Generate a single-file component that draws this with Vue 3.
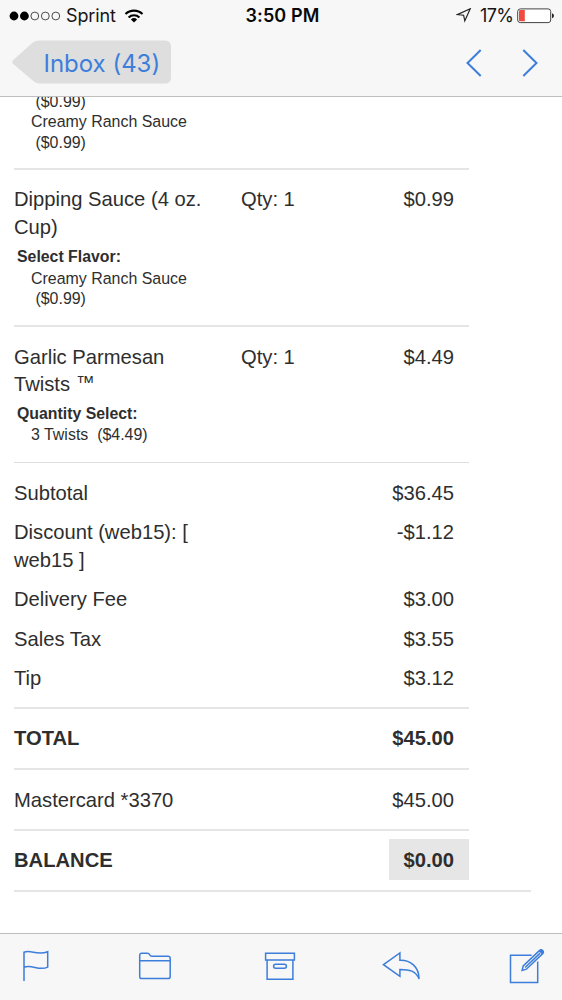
<script setup>
const items = [
  { id: 'dipping', name: ['Dipping Sauce (4 oz.', 'Cup)'], qty: 'Qty: 1', price: '$0.99', label: 'Select Flavor:', options: ['Creamy Ranch Sauce', '\u00a0($0.99)'] },
  { id: 'twists', name: ['Garlic Parmesan', 'Twists\u00a0'], mark: '™', qty: 'Qty: 1', price: '$4.49', label: 'Quantity Select:', options: ['3 Twists\u00a0 ($4.49)'] },
]
const charges = [
  { name: ['Subtotal'], amount: '$36.45' },
  { name: ['Discount (web15): [', 'web15 ]'], amount: '-$1.12' },
  { name: ['Delivery Fee'], amount: '$3.00' },
  { name: ['Sales Tax'], amount: '$3.55' },
  { name: ['Tip'], amount: '$3.12' },
]
</script>

<template>
  <div class="screen">
    <header class="top">
      <div class="status">
        <div class="carrier">
          <svg class="dots" width="52" height="10" viewBox="0 0 52 10">
            <circle cx="5" cy="5" r="4.4" /><circle cx="15.4" cy="5" r="4.4" />
            <g fill="none" stroke="#222" stroke-width="0.8"><circle cx="25.8" cy="5" r="3.9" /><circle cx="36.3" cy="5" r="3.9" /><circle cx="46.8" cy="5" r="3.9" /></g>
          </svg>
          <span class="sprint">Sprint</span>
          <svg class="wifi" width="20" height="14" viewBox="0 0 20 14" fill="none" stroke="#000" stroke-width="2.1">
            <path d="M1.5 5.1A12.2 12.2 0 0 1 18.5 5.1" /><path d="M4.6 8.4A7.8 7.8 0 0 1 15.4 8.4" />
            <path d="M6.9 10.5A4.6 4.6 0 0 1 13.1 10.5L10 13.6Z" fill="#000" stroke="none" />
          </svg>
        </div>
        <div class="clock">3:50 PM</div>
        <div class="power">
          <svg width="16" height="15" viewBox="0 0 16 15" fill="none" stroke="#222" stroke-width="1.2"><path d="M14.2 .8L1.4 6.6L7.6 7.2L8.8 12.9Z" /></svg>
          <span class="percent">17%</span>
          <svg class="battery" width="38" height="16" viewBox="0 0 38 16">
            <rect x="0.7" y="0.9" width="33" height="13.7" rx="2.6" fill="#fff" stroke="#444" stroke-width="1" />
            <path d="M3.2 2.1H7.8V13.3H3.2Q2 13.3 2 12V3.4Q2 2.1 3.2 2.1Z" fill="#f04a3e" />
            <path d="M35 5.3Q37 6 37 7.7T35 10.2Z" fill="#222" />
          </svg>
        </div>
      </div>
      <nav class="nav">
        <div class="back">
          <svg class="back-shape" width="160" height="44" viewBox="0 0 160 44"><path d="M1 20.2L20.5 2.7Q23.5 0.4 27 0.4H153Q159 0.4 159 6.4V37.6Q159 43.6 153 43.6H28Q24.5 43.6 21.5 41.2L1 23.7Q-0.7 22 1 20.2Z" fill="#dedede" /></svg>
          <span class="back-label">Inbox (43)</span>
        </div>
        <svg class="arrows" width="74" height="28" viewBox="0 0 74 28" fill="none" stroke="#3d7edb" stroke-width="2"><path d="M15.7 1L2.5 14L15.7 27" /><path d="M58.3 1L71.5 14L58.3 27" /></svg>
      </nav>
    </header>

    <main class="mail">
      <section class="previous">
        <div>&nbsp;($0.99)</div><div>Creamy Ranch Sauce</div><div>&nbsp;($0.99)</div>
      </section>
      <section v-for="item in items" :key="item.id" class="item" :class="item.id">
        <div class="item-row">
          <div><div v-for="(line, i) in item.name" :key="line">{{ line }}<span v-if="item.mark && i === item.name.length - 1" class="mark">{{ item.mark }}</span></div></div>
          <div>{{ item.qty }}</div>
          <div class="amount">{{ item.price }}</div>
        </div>
        <div class="option-label">{{ item.label }}</div>
        <div class="options"><div v-for="line in item.options" :key="line">{{ line }}</div></div>
      </section>
      <section class="charges">
        <div v-for="charge in charges" :key="charge.amount" class="charge">
          <div><div v-for="line in charge.name" :key="line">{{ line }}</div></div>
          <div class="amount">{{ charge.amount }}</div>
        </div>
      </section>
      <section class="summary strong"><span>TOTAL</span><span class="amount">$45.00</span></section>
      <section class="summary card"><span>Mastercard *3370</span><span class="amount">$45.00</span></section>
      <section class="summary balance strong"><span>BALANCE</span><span class="balance-amount">$0.00</span></section>
    </main>

    <footer class="toolbar">
      <svg width="28" height="32" viewBox="0 0 28 32"><path d="M2 31V2.3C9-.8 15 6.2 25.7 1.7V17.1C17 21.5 10 14 2 17.3" /></svg>
      <svg width="34" height="30" viewBox="0 0 34 30"><path d="M1.7 9.3V4.5Q1.7 2.3 3.8 2.3H9.4Q11 2.3 11.7 3.8Q12.4 5.2 14 5.2H30Q32.2 5.2 32.2 7.4V25.5Q32.2 27.6 30 27.6H3.9Q1.7 27.6 1.7 25.5V9.8H32.2" /></svg>
      <svg class="archive" width="32" height="30" viewBox="0 0 32 30"><path d="M1.6 2.2H30.4V9H1.6ZM3.1 9V28.3H28.9V9" /><rect x="9.6" y="13.3" width="12.8" height="3.9" rx="1.95" /></svg>
      <svg class="reply" width="40" height="30" viewBox="0 0 40 30"><path d="M1.5 13.7L17.9 2V9.3C28.5 9 36.9 15.5 37.1 27.9C33.7 20 27.5 18.3 17.9 18.4V25.4Z" /></svg>
      <svg width="36" height="36" viewBox="0 0 36 36"><path d="M22.7 7.3H1.5V34.4H28.7V13.5" /><path d="M13.1 22.4L14.2 18L30.6 2.4Q32 .9 33.6 2.5Q35.2 4.1 33.7 5.6L17.4 21.2Z" /><path d="M16.1 19.5L31.1 5.1" /><path d="M29.8 3.2L31.4 1.6Q33 1 34.1 2.6Q35.1 4.3 32.9 6.3Z" fill="#3d7edb" stroke="none" /></svg>
    </footer>
  </div>
</template>

<style>
body { margin: 0; background: #fff; }
</style>

<style scoped>
.screen { width: 562px; height: 1000px; display: flex; flex-direction: column; overflow: hidden; background: #fff; color: #2e2e2e; font-family: "Liberation Sans", Arial, sans-serif; }
.top { height: 97px; flex: none; box-sizing: border-box; background: #f7f7f7; border-bottom: 1px solid #bfbfbf; font-family: Inter, sans-serif; }
.status { height: 31px; display: grid; grid-template-columns: 1fr auto 1fr; align-items: center; color: #151515; font-size: 18px; line-height: 31px; }
.carrier { display: flex; align-items: center; padding-left: 9px; }
.sprint { margin-left: 5px; width: 51px; white-space: nowrap; letter-spacing: -0.1px; }
.wifi { margin-left: 7px; }
.clock { font-weight: 600; letter-spacing: .15px; color: #080808; padding-left: 3px; }
.power { display: flex; justify-content: flex-end; align-items: center; padding-right: 7px; }
.percent { width: 33px; margin-left: 8px; letter-spacing: -.6px; white-space: nowrap; }
.battery { margin-left: 4px; }
.nav { height: 65px; display: flex; justify-content: space-between; padding: 0 23px 0 12px; box-sizing: border-box; }
.back { display: grid; margin-top: 9px; height: 44px; }
.back-shape, .back-label { grid-area: 1 / 1; }
.back-label { padding-left: 31.5px; font-size: 24px; line-height: 47px; letter-spacing: -.02px; color: #3d7edb; }
.arrows { margin-top: 18px; }
.mail { flex: 1; min-height: 0; padding-left: 14px; overflow: hidden; font-size: 20.2px; line-height: 27.7px; }
.previous, .item, .charges, .summary { width: 455px; box-sizing: border-box; border-bottom: 2px solid #e5e5e5; }
.previous { height: 78px; margin-top: -5px; padding-left: 17px; font-size: 15.95px; line-height: 20.4px; }
.item { padding-top: 16.3px; }
.dipping { height: 157px; }
.twists { height: 136px; padding-top: 16.6px; border-bottom: 1px solid #dedede; }
.twists .option-label { margin-top: 5px; }
.item-row { display: grid; grid-template-columns: 227px 1fr auto; }
.mark { font-size: 18.5px; line-height: 1; vertical-align: 2px; }
.amount { padding-right: 15px; text-align: right; }
.option-label { margin: 5.7px 0 2.4px 3px; font-size: 15.85px; line-height: 19px; font-weight: 700; }
.options { padding-left: 17px; font-size: 15.95px; line-height: 20.4px; }
.charges { height: 246px; padding-top: 16.5px; display: flex; flex-direction: column; gap: 11.8px; }
.charge { display: flex; justify-content: space-between; }
.summary { height: 61px; display: flex; align-items: center; justify-content: space-between; }
.card { padding-top: 2px; }
.strong { font-weight: 700; }
.balance { width: 517px; padding-right: 62px; }
.balance-amount { box-sizing: border-box; width: 80px; height: 41px; line-height: 42px; margin-top: -2px; padding-right: 15px; text-align: right; background: #e6e6e6; }
.toolbar { height: 67px; flex: none; box-sizing: border-box; border-top: 1px solid #bcbcbc; background: #f7f7f7; display: flex; justify-content: space-between; align-items: center; padding: 0 17px 2px 22px; }
.toolbar svg { fill: none; stroke: #3d7edb; stroke-width: 1.5; }
.toolbar .archive { margin-left: 3px; margin-right: -3px; }
.toolbar .reply { margin-left: 1px; margin-right: -1px; }
</style>
